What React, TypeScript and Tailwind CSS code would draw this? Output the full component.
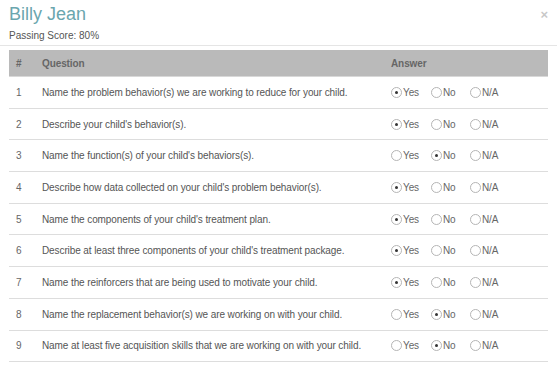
const questions = [
  { q: "Name the problem behavior(s) we are working to reduce for your child.", a: "yes" },
  { q: "Describe your child's behavior(s).", a: "yes" },
  { q: "Name the function(s) of your child's behaviors(s).", a: "no" },
  { q: "Describe how data collected on your child's problem behavior(s).", a: "yes" },
  { q: "Name the components of your child's treatment plan.", a: "yes" },
  { q: "Describe at least three components of your child's treatment package.", a: "yes" },
  { q: "Name the reinforcers that are being used to motivate your child.", a: "yes" },
  { q: "Name the replacement behavior(s) we are working on with your child.", a: "no" },
  { q: "Name at least five acquisition skills that we are working on with your child.", a: "no" },
];

function Radio({ checked, label }: { checked: boolean; label: string }) {
  return (
    <span className="flex items-center">
      <span className="w-[11px] h-[11px] rounded-full border border-[#b5b5b5] bg-white flex items-center justify-center">
        {checked && <span className="w-[3px] h-[3px] rounded-full bg-[#333]" />}
      </span>
      <span className="ml-[1px]">{label}</span>
    </span>
  );
}

export default function App() {
  return (
    <div className="w-[557px] h-[367px] bg-white overflow-hidden text-[#555]" style={{ fontFamily: '"Liberation Sans", Arial, sans-serif' }}>
      {/* Header */}
      <div className="relative px-[9px] pt-[3px] h-[46px] border-b border-[#e5e5e5]">
        <h2 className="text-[18px] leading-[22px] text-[#6aa6ae]">Billy Jean</h2>
        <p className="text-[10px] leading-[13px] mt-[4px] text-[#555]">Passing Score: 80%</p>
        <span className="absolute right-[9px] top-[5px] text-[13px] font-bold text-[#c8c8c8]">×</span>
      </div>

      {/* Table */}
      <div className="mx-[9px] mt-[4px] text-[10px] tracking-[-0.1px]">
        <div className="flex items-center h-[27px] bg-[#bababa] border-b border-[#d8d8d8] font-bold text-[#666]">
          <div className="w-[33px] pl-[7px]">#</div>
          <div className="w-[349px]">Question</div>
          <div>Answer</div>
        </div>
        {questions.map((row, i) => (
          <div key={i} className="flex items-center h-[31.7px] border-b border-[#dddddd]">
            <div className="w-[33px] pl-[7px] text-[#666]">{i + 1}</div>
            <div className="w-[349px]">{row.q}</div>
            <div className="flex items-center text-[#666]">
              <div className="w-[40px]"><Radio checked={row.a === "yes"} label="Yes" /></div>
              <div className="w-[39px]"><Radio checked={row.a === "no"} label="No" /></div>
              <div><Radio checked={row.a === "na"} label="N/A" /></div>
            </div>
          </div>
        ))}
      </div>
    </div>
  );
}
